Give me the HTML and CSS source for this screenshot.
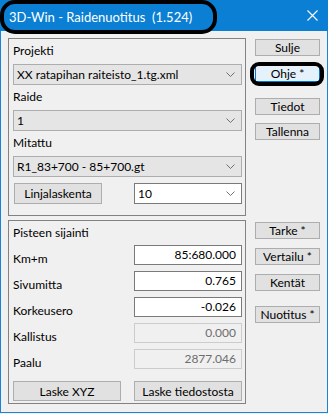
FILE: index.html
```html
<!DOCTYPE html>
<html lang="fi">
<head>
    <meta charset="UTF-8">
    <title>3D-Win - Raidenuotitus</title>
    <link rel="stylesheet" href="styles.css">
</head>
<body>
    <div class="window">
        <div class="titlebar">
            <span class="title">3D-Win - Raidenuotitus&nbsp; (1.524)</span>
            <svg class="close" width="11" height="11" viewBox="0 0 11 11">
                <path d="M0.5 0.5 L10.5 10.5 M10.5 0.5 L0.5 10.5" stroke="#fff" stroke-width="1.1" fill="none"/>
            </svg>
            <div class="mark-title"></div>
        </div>

        <div class="content">
            <div class="left">
                <div class="group group-top">
                    <div class="label">Projekti</div>
                    <div class="combo">
                        <span>XX ratapihan raiteisto_1.tg.xml</span>
                        <svg class="chev" width="9" height="5" viewBox="0 0 9 5"><path d="M0.5 0.5 L4.5 4.5 L8.5 0.5" stroke="#707070" fill="none"/></svg>
                    </div>
                    <div class="label">Raide</div>
                    <div class="combo">
                        <span>1</span>
                        <svg class="chev" width="9" height="5" viewBox="0 0 9 5"><path d="M0.5 0.5 L4.5 4.5 L8.5 0.5" stroke="#707070" fill="none"/></svg>
                    </div>
                    <div class="label">Mitattu</div>
                    <div class="combo">
                        <span>R1_83+700 - 85+700.gt</span>
                        <svg class="chev" width="9" height="5" viewBox="0 0 9 5"><path d="M0.5 0.5 L4.5 4.5 L8.5 0.5" stroke="#707070" fill="none"/></svg>
                    </div>
                    <div class="calc-row">
                        <button class="btn btn-calc">Linjalaskenta</button>
                        <div class="combo combo-white">
                            <span>10</span>
                            <svg class="chev" width="9" height="5" viewBox="0 0 9 5"><path d="M0.5 0.5 L4.5 4.5 L8.5 0.5" stroke="#707070" fill="none"/></svg>
                        </div>
                    </div>
                </div>

                <div class="group group-bottom">
                    <div class="label">Pisteen sijainti</div>
                    <div class="rows">
                        <div class="row"><span class="row-label">Km+m</span><div class="field">85:680.000</div></div>
                        <div class="row"><span class="row-label">Sivumitta</span><div class="field">0.765</div></div>
                        <div class="row"><span class="row-label">Korkeusero</span><div class="field">-0.026</div></div>
                        <div class="row"><span class="row-label">Kallistus</span><div class="field disabled">0.000</div></div>
                        <div class="row"><span class="row-label">Paalu</span><div class="field disabled">2877.046</div></div>
                    </div>
                    <div class="btn-row">
                        <button class="btn btn-wide">Laske XYZ</button>
                        <button class="btn btn-wide">Laske tiedostosta</button>
                    </div>
                </div>
            </div>

            <div class="right">
                <button class="btn side b-sulje">Sulje</button>
                <button class="btn side b-ohje">Ohje *</button>
                <button class="btn side b-tiedot">Tiedot</button>
                <button class="btn side b-tallenna">Tallenna</button>
                <button class="btn side b-tarke">Tarke *</button>
                <button class="btn side b-vertailu">Vertailu *</button>
                <button class="btn side b-kentat">Kentät</button>
                <button class="btn side b-nuotitus">Nuotitus *</button>
            </div>
        </div>
    </div>
</body>
</html>
```

FILE: styles.css
```css
body {
    margin: 0;
    background: #f0f0f0;
    font-family: Lato, "Open Sans", sans-serif;
    font-size: 12px;
    color: #000;
}
.window {
    position: relative;
    width: 328px;
    height: 413px;
    box-sizing: border-box;
    border: 1px solid #1883d7;
    border-top: none;
    background: #f0f0f0;
}
.titlebar {
    position: relative;
    height: 31px;
    margin: 0 -1px;
    background: #0a7fd4;
    display: flex;
    align-items: center;
    justify-content: space-between;
    padding: 0 10px 0 9px;
}
.title {
    color: #fff;
    font-size: 13px;
    white-space: pre;
    padding-top: 2px;
}
.mark-title {
    position: absolute;
    left: 0;
    top: 0;
    width: 217px;
    height: 34px;
    box-sizing: border-box;
    border: 4px solid #000;
    border-radius: 15px;
}
.content {
    display: flex;
    padding: 7px 0 0 7px;
}
.left {
    width: 238px;
}
.group {
    border: 1px solid #828282;
    padding: 4px 3px 0 4px;
}
.group-top {
    height: 178px;
    box-sizing: border-box;
}
.group-bottom {
    margin-top: 4px;
    height: 184px;
    box-sizing: border-box;
}
.label {
    line-height: 16px;
    height: 16px;
}
.combo {
    height: 21px;
    box-sizing: border-box;
    border: 1px solid #adadad;
    background: #e5e5e5;
    margin: 5px 0 4px 0;
    display: flex;
    align-items: center;
    justify-content: space-between;
    padding: 0 6px 0 3px;
    line-height: 19px;
}
.combo-white {
    background: #fff;
    border-color: #7a7a7a;
    width: 108px;
    margin: 0;
}
.calc-row {
    display: flex;
    justify-content: space-between;
    margin-top: 6px;
}
.btn {
    font-family: inherit;
    font-size: 12px;
    color: #000;
    background: #e1e1e1;
    border: 1px solid #adadad;
    padding: 0;
    margin: 0;
    box-sizing: border-box;
}
.btn-calc {
    width: 88px;
    height: 21px;
    margin-left: 1px;
}
.rows {
    display: flex;
    flex-direction: column;
    gap: 6px;
    margin-top: 4px;
}
.row {
    display: flex;
    justify-content: space-between;
    height: 20px;
}
.row-label {
    padding-top: 6px;
    line-height: 16px;
}
.field {
    width: 108px;
    height: 20px;
    box-sizing: border-box;
    border: 1px solid #7a7a7a;
    background: #fff;
    text-align: right;
    padding-right: 5px;
    line-height: 18px;
}
.field.disabled {
    background: #f0f0f0;
    border-color: #cccccc;
    color: #6d6d6d;
}
.btn-row {
    display: flex;
    justify-content: space-between;
    margin-top: 12px;
}
.btn-wide {
    width: 108px;
    height: 20px;
}
.right {
    display: flex;
    flex-direction: column;
    margin-left: 9px;
}
.side {
    width: 65px;
    height: 17px;
    line-height: 15px;
}
.b-sulje { margin-top: 1px; }
.b-ohje {
    position: relative;
    margin-top: 9px;
    background: #e5f1fb;
    border-color: #0078d7;
}
.b-ohje::after {
    content: "";
    position: absolute;
    left: -6px;
    right: -5px;
    top: -4px;
    bottom: -5px;
    border: 4px solid #000;
    border-radius: 9px;
}
.b-tiedot { margin-top: 16px; }
.b-tallenna { margin-top: 8px; }
.b-tarke { margin-top: 82px; }
.b-vertailu { margin-top: 9px; }
.b-kentat { margin-top: 9px; }
.b-nuotitus { margin-top: 15px; }
```
